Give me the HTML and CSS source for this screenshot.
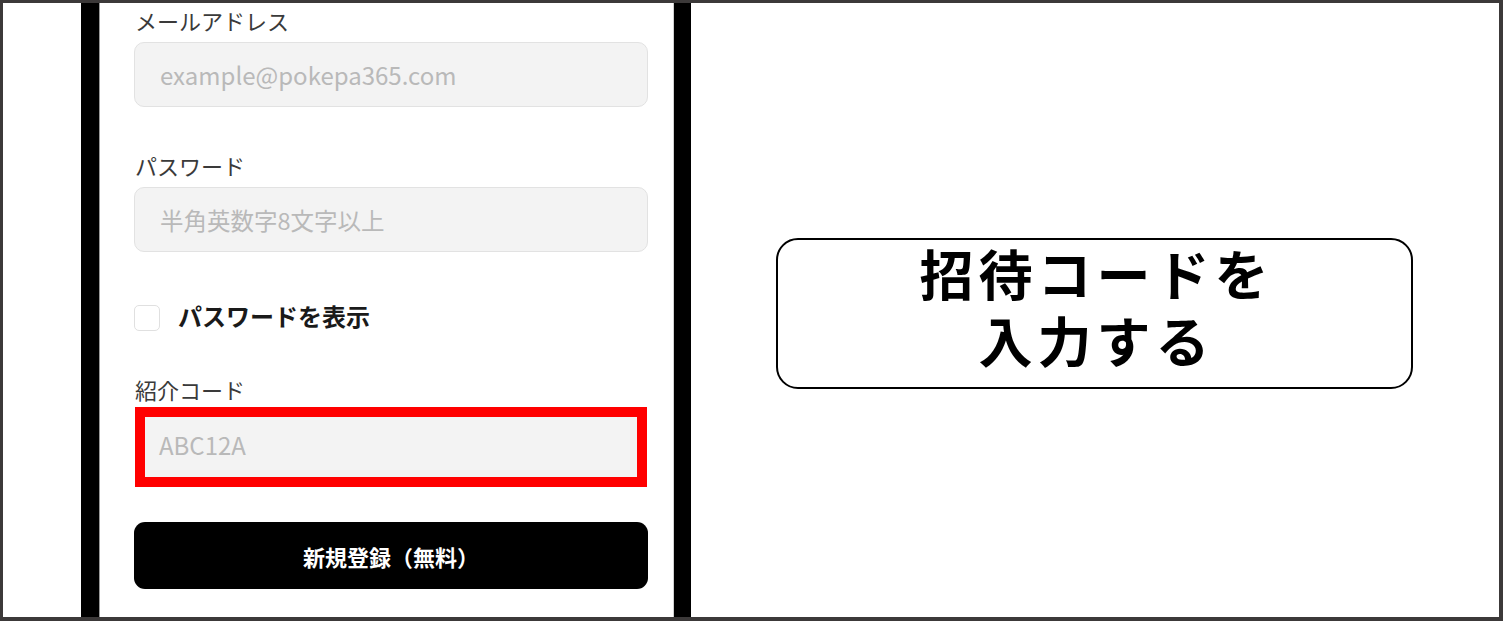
FILE: index.html
```html
<!DOCTYPE html>
<html lang="ja">
<head>
<meta charset="utf-8">
<link rel="stylesheet" href="styles.css">
</head>
<body>
<div class="frame">
  <div class="gutter"></div>
  <div class="bar bar-left"></div>
  <div class="panel">
    <div class="label label-first">メールアドレス</div>
    <div class="input"><span class="ph ph-latin">example@pokepa365.com</span></div>
    <div class="label label-gap">パスワード</div>
    <div class="input"><span class="ph">半角英数字8文字以上</span></div>
    <div class="check-row">
      <span class="checkbox"></span>
      <span class="check-label">パスワードを表示</span>
    </div>
    <div class="label label-code">紹介コード</div>
    <div class="highlight">
      <div class="input input-flat"><span class="ph ph-latin">ABC12A</span></div>
    </div>
    <div class="button">新規登録（無料）</div>
  </div>
  <div class="bar bar-right"></div>
  <div class="stage">
    <div class="callout">
      <div class="callout-line">招待コードを</div>
      <div class="callout-line">入力する</div>
    </div>
  </div>
</div>
</body>
</html>
```

FILE: styles.css
```css
html, body {
  margin: 0;
  padding: 0;
  background: #ffffff;
}
body {
  font-family: "Noto Sans CJK JP", "Noto Sans", sans-serif;
}
.frame {
  box-sizing: border-box;
  width: 1503px;
  height: 621px;
  border-style: solid;
  border-color: #3c3939;
  border-width: 3px 4px 4px 3px;
  display: flex;
  background: #ffffff;
  overflow: hidden;
}
.gutter {
  width: 78px;
  flex: none;
}
.bar {
  background: #000000;
  flex: none;
}
.bar-left {
  width: 18px;
  border-right: 1px solid #9a9a9a;
}
.bar-right {
  width: 17px;
  border-left: 1px solid #cfcfcf;
}
.panel {
  width: 573px;
  flex: none;
  box-sizing: border-box;
  padding-left: 34px;
  display: flex;
  flex-direction: column;
  overflow: hidden;
}
.label {
  font-size: 22px;
  line-height: 34px;
  height: 34px;
  color: #3a3a3a;
  margin-bottom: 5px;
  padding-left: 1px;
}
.label-gap {
  margin-top: 41px;
}
.label-code {
  margin-top: 41px;
  margin-bottom: 1px;
}
.input {
  box-sizing: border-box;
  width: 514px;
  height: 65px;
  background: #f3f3f3;
  border: 1px solid #e2e2e2;
  border-radius: 10px;
  display: flex;
  align-items: center;
  padding-left: 25px;
}
.ph {
  color: #b9b9b9;
  font-size: 23.5px;
}
.ph-latin {
  font-size: 24px;
}
.check-row {
  margin-top: 53px;
  height: 26px;
  display: flex;
  align-items: center;
}
.checkbox {
  box-sizing: border-box;
  width: 26px;
  height: 26px;
  border: 1.5px solid #e0e0e0;
  border-radius: 5px;
  background: #ffffff;
  margin-right: 18px;
}
.check-label {
  font-size: 24px;
  font-weight: 700;
  color: #1a1a1a;
  line-height: 26px;
  margin-top: -5px;
}
.highlight {
  box-sizing: border-box;
  width: 512px;
  height: 80px;
  margin-left: 1px;
  border: 10px solid #ff0000;
  background: #f3f3f3;
}
.input-flat {
  width: 100%;
  height: 100%;
  border: none;
  border-radius: 0;
  padding-left: 14px;
  padding-bottom: 6px;
}
.button {
  margin-top: 35px;
  width: 514px;
  height: 67px;
  background: #000000;
  border-radius: 11px;
  color: #ffffff;
  font-size: 22px;
  font-weight: 700;
  display: flex;
  align-items: center;
  justify-content: center;
}
.stage {
  flex: 1;
  display: flex;
  align-items: center;
  justify-content: center;
  padding-top: 7px;
  padding-right: 2px;
}
.callout {
  box-sizing: border-box;
  width: 637px;
  height: 151px;
  border: 2px solid #000000;
  border-radius: 22px;
  display: flex;
  flex-direction: column;
  align-items: center;
  justify-content: center;
  text-align: center;
  color: #000000;
  padding-left: 5px;
  padding-bottom: 15px;
}
.callout-line {
  font-size: 54px;
  font-weight: 700;
  letter-spacing: 5px;
  line-height: 67px;
  height: 67px;
}
```
